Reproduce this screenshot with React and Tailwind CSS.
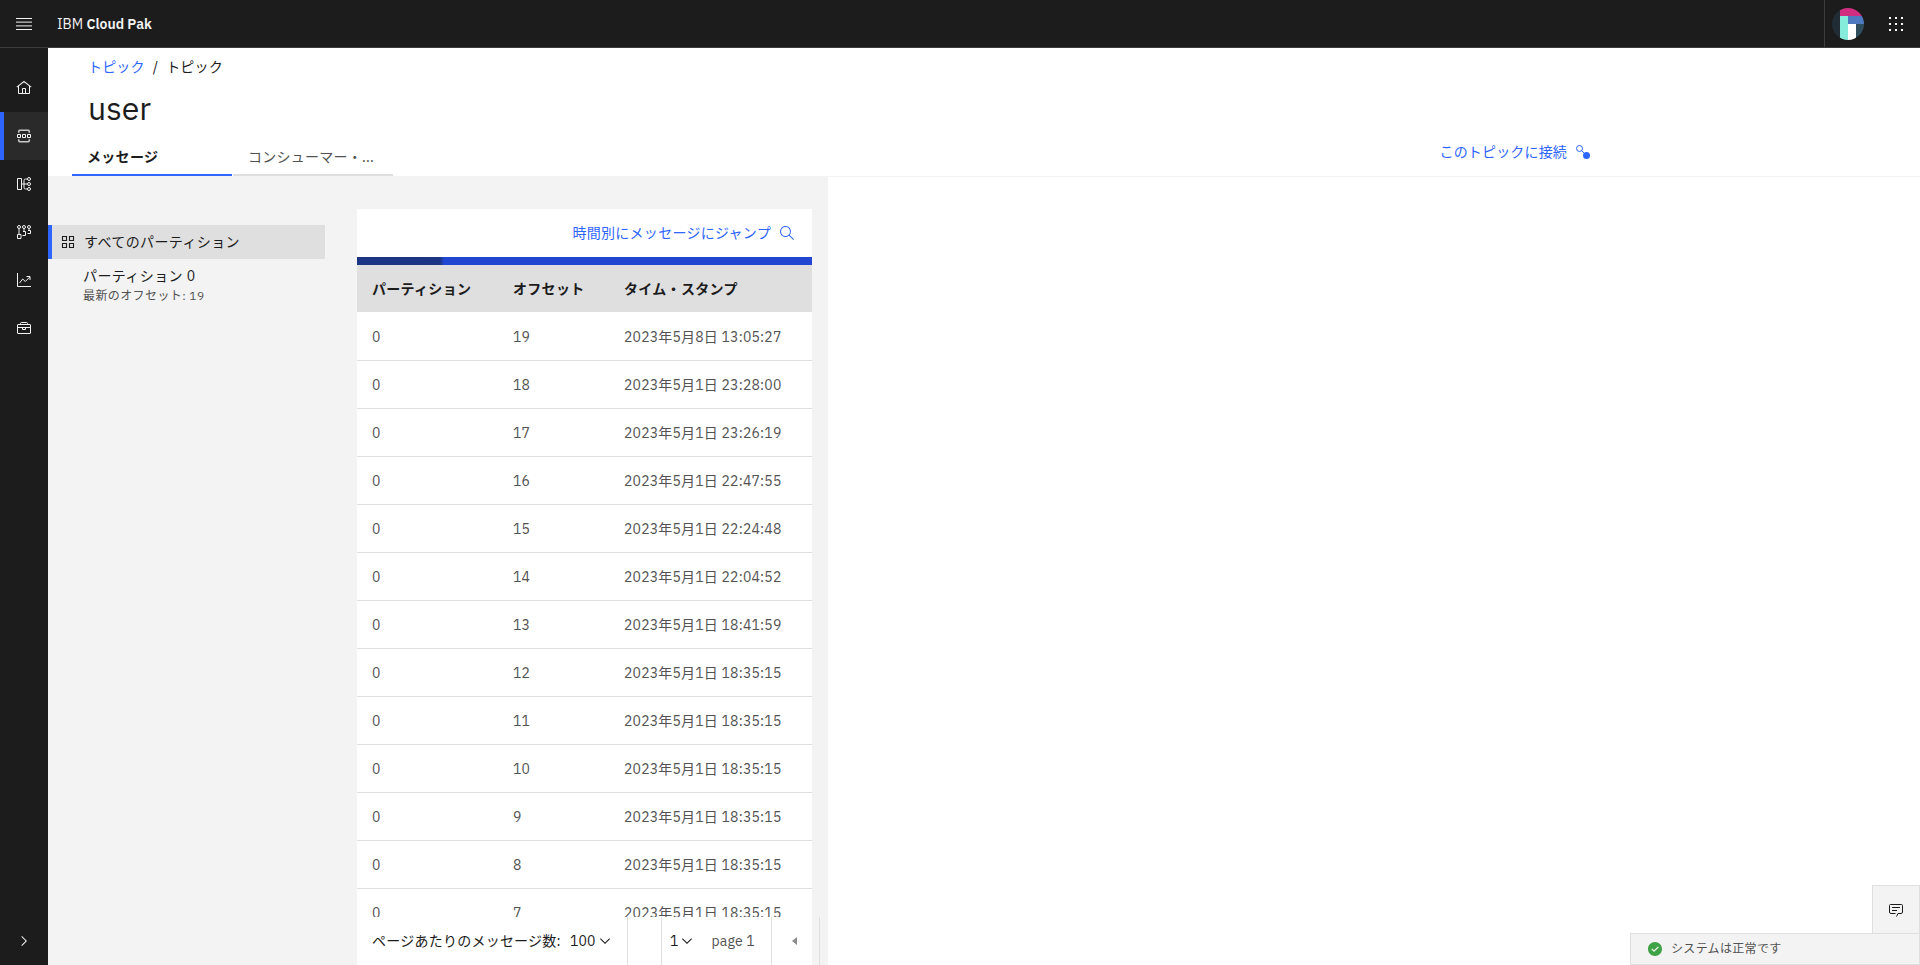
const rows = [
  [19, '2023年5月8日 13:05:27'],
  [18, '2023年5月1日 23:28:00'],
  [17, '2023年5月1日 23:26:19'],
  [16, '2023年5月1日 22:47:55'],
  [15, '2023年5月1日 22:24:48'],
  [14, '2023年5月1日 22:04:52'],
  [13, '2023年5月1日 18:41:59'],
  [12, '2023年5月1日 18:35:15'],
  [11, '2023年5月1日 18:35:15'],
  [10, '2023年5月1日 18:35:15'],
  [9, '2023年5月1日 18:35:15'],
  [8, '2023年5月1日 18:35:15'],
  [7, '2023年5月1日 18:35:15'],
];

const HomeIcon = () => (
  <svg width="16" height="16" viewBox="0 0 32 32" fill="currentColor">
    <path d="M16.6123,2.2138a1.01,1.01,0,0,0-1.2427,0L1,13.4194l1.2427,1.5717L4,13.6208V26a2.0041,2.0041,0,0,0,2,2H26a2.0037,2.0037,0,0,0,2-2V13.63L29.7573,15,31,13.4282ZM18,26H14V18h4Zm2,0V18a2.0023,2.0023,0,0,0-2-2H14a2.002,2.002,0,0,0-2,2v8H6V12.0615l10-7.79,10,7.8005V26Z" />
  </svg>
);

const TopicsIcon = () => (
  <svg width="16" height="16" viewBox="0 0 16 16" fill="none" stroke="currentColor">
    <path d="M2.750 4.750V3.250a1 1 0 0 1 1-1h8.500a1 1 0 0 1 1 1v1.500M2.750 11.250v1.500a1 1 0 0 0 1 1h8.500a1 1 0 0 0 1-1v-1.500" strokeWidth="1.500" opacity="0.800" />
    <path d="M1.500 6.500h3v3h-3zM6.500 6.500h3v3h-3zM11.500 6.500h3v3h-3z" />
  </svg>
);

const SchemaIcon = () => (
  <svg width="16" height="16" viewBox="0 0 16 16" fill="none" stroke="currentColor">
    <path d="M1.500 2.500h4v11h-4z" />
    <path d="M6 8h5M11 3H9.500A1.500 1.500 0 0 0 8 4.500v7A1.500 1.500 0 0 0 9.500 13H11" />
    <circle cx="13" cy="3" r="1.500" />
    <circle cx="13" cy="8" r="1.500" />
    <circle cx="13" cy="13" r="1.500" />
  </svg>
);

const GroupsIcon = () => (
  <svg width="16" height="16" viewBox="0 0 16 16" fill="none" stroke="currentColor">
    <circle cx="3" cy="3" r="1.500" />
    <circle cx="8" cy="3" r="1.500" />
    <circle cx="13" cy="3" r="1.500" />
    <path d="M3 4.500V10M1.500 10.500h3.500v4H1.500zM8 4.500v3M7 7.500h2.500v4H6.500M13 4.500v2M12 6.500h2.500v3h-3" />
  </svg>
);

const ChartIcon = () => (
  <svg width="16" height="16" viewBox="0 0 16 16" fill="none" stroke="currentColor">
    <path d="M1.500 1v13.500H15M3.500 11l3.200-4 2.600 2.500L13.800 5M10.500 4.500H14V8" />
  </svg>
);

const ToolboxIcon = () => (
  <svg width="16" height="16" viewBox="0 0 16 16" fill="none" stroke="currentColor">
    <path d="M4.500 4.500v-1a1 1 0 0 1 1-1h5a1 1 0 0 1 1 1v1" />
    <rect x="1.500" y="4.500" width="13" height="9" rx="0.500" />
    <path d="M1.500 7.500h13M6.500 7.500h3v2h-3z" />
  </svg>
);

const ChevronDown = () => (
  <svg width="16" height="16" viewBox="0 0 16 16" fill="currentColor">
    <path d="M8 11L3 6 3.700 5.300 8 9.600 12.300 5.300 13 6z" />
  </svg>
);

const navItems = [HomeIcon, TopicsIcon, SchemaIcon, GroupsIcon, ChartIcon, ToolboxIcon];

const Header = () => (
  <header className="flex h-12 shrink-0 items-center border-b border-[#3d3d3d] bg-[#1c1c1c] text-[#f3f3f3]">
    <button className="flex w-12 justify-center">
      <svg width="16" height="12" viewBox="0 0 16 12" fill="currentColor">
        <path d="M0 0h16v1H0zM0 11h16v1H0z" />
        <path d="M0 3.500h16v1.200H0zM0 7.300h16v1.200H0z" opacity="0.800" />
      </svg>
    </button>
    <div className="ml-[9px] text-sm">
      IBM <span className="font-semibold">Cloud Pak</span>
    </div>
    <div className="ml-auto flex h-full items-center border-l border-[#3d3d3d]">
      <div className="flex w-[47px] pl-[7px]">
        <svg width="32" height="32" viewBox="0 0 32 32">
          <clipPath id="avatar">
            <circle cx="16" cy="16" r="16" />
          </clipPath>
          <g clipPath="url(#avatar)">
            <path fill="#202d37" d="M0 0h8v32H0z" />
            <path fill="#d12e82" d="M8 0h24v8H8z" />
            <path fill="#85ebda" d="M8 8h8v24H8z" />
            <path fill="#4f7ac2" d="M16 8h16v8H16z" />
            <path fill="#fff" d="M16 16h8v16h-8z" />
            <path fill="#304e5e" d="M24 16h8v16h-8z" />
          </g>
        </svg>
      </div>
      <div className="grid w-12 grid-cols-[repeat(3,2px)] justify-center gap-1">
        {Array.from({ length: 9 }, (_, i) => (
          <span key={i} className="h-0.5 w-0.5 bg-white" />
        ))}
      </div>
    </div>
  </header>
);

const SideNav = () => (
  <nav className="flex w-12 shrink-0 flex-col bg-[#1c1c1c] pt-4 text-[#f3f3f3]">
    {navItems.map((Icon, i) => (
      <a
        key={i}
        className={
          i === 1
            ? 'flex h-12 items-center border-l-4 border-[#2f65ff] bg-[#2a2a2a] pl-3'
            : 'flex h-12 items-center pl-4'
        }
      >
        <Icon />
      </a>
    ))}
    <button className="mt-auto flex h-12 items-center justify-center">
      <svg width="16" height="16" viewBox="0 0 16 16" fill="currentColor">
        <path d="M11 8L6 13 5.300 12.300 9.600 8 5.300 3.700 6 3z" />
      </svg>
    </button>
  </nav>
);

const PageHeader = () => (
  <div className="flex h-[129px] shrink-0 flex-col border-b border-[#f3f3f3] bg-white">
    <div className="flex h-[38px] items-center pl-10 text-sm tracking-[0.16px]">
      <a className="text-[#2f65ff]">トピック</a>
      <span className="mx-2">/</span>
      <span>トピック</span>
    </div>
    <h1 className="pl-10 text-[32px] leading-[44px]">user</h1>
    <div className="mt-auto flex items-end justify-between">
      <div className="flex gap-px pl-6 text-sm tracking-[0.16px]">
        <div className="h-10 w-40 border-b-2 border-[#2f65ff] pl-[15px] leading-[42px] font-semibold tracking-[0.3px]">メッセージ</div>
        <div className="h-10 w-40 border-b-2 border-[#dfdfdf] pl-[15px] leading-[42px] tracking-[0.25px] text-[#525252]">コンシューマー・...</div>
      </div>
      <a className="mr-[329px] mb-[15px] flex items-center gap-2 text-sm leading-[18px] tracking-[0.16px] text-[#2f65ff]">
        このトピックに接続
        <svg width="16" height="16" viewBox="0 0 16 16" fill="none" stroke="currentColor">
          <circle cx="4.500" cy="4.500" r="3" />
          <path d="M6.600 6.600L9 9" />
          <circle cx="11.500" cy="11.500" r="3.500" fill="currentColor" stroke="none" />
        </svg>
      </a>
    </div>
  </div>
);

const Partitions = () => (
  <aside className="w-[309px] shrink-0 pt-12">
    <div className="flex h-[34px] w-[277px] items-center border-l-4 border-[#2f65ff] bg-[#dfdfdf] pl-2 text-sm tracking-[0.4px]">
      <svg width="16" height="16" viewBox="0 0 16 16" fill="none" stroke="currentColor" strokeWidth="1.100">
        <path d="M2.500 2.500h4v4h-4zM9.500 2.500h4v4h-4zM2.500 9.500h4v4h-4zM9.500 9.500h4v4h-4z" />
      </svg>
      <span className="ml-2">すべてのパーティション</span>
    </div>
    <div className="mt-2 pl-[35px]">
      <div className="text-sm leading-[18px] tracking-[0.4px]">パーティション 0</div>
      <div className="mt-0.5 text-xs leading-[18px] tracking-[0.4px] text-[#525252]">最新のオフセット: 19</div>
    </div>
  </aside>
);

const MessageTable = () => (
  <section className="mt-[32px] flex w-[455px] shrink-0 flex-col bg-white">
    <div className="flex h-12 shrink-0 items-center justify-end gap-2 pr-[17px] text-sm tracking-[0.28px] text-[#2f65ff]">
      時間別にメッセージにジャンプ
      <svg width="16" height="16" viewBox="0 0 16 16" fill="currentColor">
        <path d="M15,14.300L10.700,10c1.900-2.300,1.600-5.800-0.700-7.700S4.200,0.700,2.300,3S0.700,8.800,3,10.700c2,1.700,5,1.700,7,0l4.300,4.300L15,14.300z M2,6.500C2,4,4,2,6.500,2S11,4,11,6.500S9,11,6.500,11S2,9,2,6.500z" />
      </svg>
    </div>
    <div className="h-2 shrink-0 bg-linear-to-r from-[#1b3484] from-[83px] to-[#2146d2] to-[87px]" />
    <div className="grid h-[47px] shrink-0 grid-cols-[141px_111px_1fr] items-center bg-[#dfdfdf] pl-[15px] text-sm font-semibold tracking-[0.3px]">
      <span>パーティション</span>
      <span>オフセット</span>
      <span>タイム・スタンプ</span>
    </div>
    <div className="mt-px min-h-0 flex-1 overflow-hidden text-sm tracking-[0.18px] text-[#525252]">
      {rows.map(([offset, time]) => (
        <div key={offset} className="grid h-12 grid-cols-[141px_111px_1fr] items-center border-b border-[#dfdfdf] pl-[15px]">
          <span>0</span>
          <span>{offset}</span>
          <span className="whitespace-nowrap">{time}</span>
        </div>
      ))}
    </div>
    <div className="flex h-12 w-[463px] shrink-0 items-center border-r border-[#dfdfdf] text-sm whitespace-nowrap tracking-[0.16px]">
      <div className="flex h-full w-[271px] items-center border-r border-[#dfdfdf] pl-[15px]">
        <span className="tracking-[0.24px]">ページあたりのメッセージ数:</span>
        <span className="mr-px ml-[9px] tracking-[0.2px]">100</span>
        <ChevronDown />
      </div>
      <div className="h-full w-[34px] border-r border-[#dfdfdf]" />
      <div className="flex h-full w-[110px] items-center border-r border-[#dfdfdf] pl-2">
        1<ChevronDown />
        <span className="ml-[17px] text-[#525252]">page 1</span>
      </div>
      <div className="flex flex-1 justify-center pr-[3px]">
        <svg width="5" height="8" viewBox="0 0 5 8" fill="#8c8c8c">
          <path d="M5 0v8L0 4z" />
        </svg>
      </div>
    </div>
  </section>
);

const StatusPanel = () => (
  <div className="absolute right-0 bottom-0 flex w-[290px] flex-col items-end text-[#525252]">
    <button className="flex h-12 w-12 items-center justify-center border border-b-0 border-[#dfdfdf] bg-[#f3f3f3] text-[#1c1c1c]">
      <svg width="16" height="16" viewBox="0 0 16 16" fill="none" stroke="currentColor">
        <path d="M8.500 14.500l1.500-3h3a1.500 1.500 0 0 0 1.500-1.500V3.500A1 1 0 0 0 13.500 2.500h-11A1 1 0 0 0 1.500 3.500V10A1.500 1.500 0 0 0 3 11.500h4.500M4 5.500h8M4 8.500h5" />
      </svg>
    </button>
    <div className="flex h-8 w-full items-center gap-2 border border-[#dfdfdf] bg-[#f3f3f3] pl-4 text-xs tracking-[0.32px]">
      <svg width="16" height="16" viewBox="0 0 16 16" fill="#3fa246">
        <path d="M8,1C4.100,1,1,4.100,1,8c0,3.900,3.100,7,7,7s7-3.100,7-7C15,4.100,11.900,1,8,1z M7,11L4.300,8.300l0.900-0.800L7,9.300l4-3.900l0.900,0.800L7,11z" />
      </svg>
      システムは正常です
    </div>
  </div>
);

export default function App() {
  return (
    <div className="relative flex h-screen flex-col overflow-hidden bg-white font-['IBM_Plex_Sans','Noto_Sans','Noto_Sans_CJK_JP',sans-serif] text-[#1c1c1c]">
      <Header />
      <div className="flex min-h-0 flex-1">
        <SideNav />
        <main className="flex min-w-0 flex-1 flex-col">
          <PageHeader />
          <div className="flex min-h-0 flex-1">
            <div className="flex w-[780px] bg-[#f3f3f3]">
              <Partitions />
              <MessageTable />
            </div>
          </div>
        </main>
      </div>
      <StatusPanel />
    </div>
  );
}
